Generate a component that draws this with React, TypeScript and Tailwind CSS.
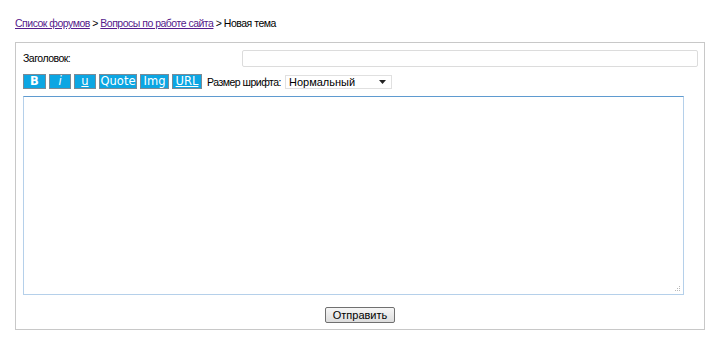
import { useState } from 'react'

const sans = { fontFamily: '"Liberation Sans", Arial, sans-serif' }
const verdana = { fontFamily: '"DejaVu Sans", Verdana, sans-serif' }

function ToolButton({ children, className = '' }: { children: React.ReactNode; className?: string }) {
  return (
    <button
      type="button"
      className={`flex h-[15px] shrink-0 items-center justify-center border border-[#7a8a96] bg-[#0ca6e3] text-[11.5px] leading-none tracking-normal text-white ${className}`}
      style={verdana}
    >
      {children}
    </button>
  )
}

export default function App() {
  const [title, setTitle] = useState('')
  const [body, setBody] = useState('')

  return (
    <div className="min-h-[357px] bg-white text-[10.5px] tracking-[-0.5px] text-black" style={sans}>
      <div className="px-[15px] pt-[17px] leading-[13px]">
        <a href="#" className="text-[#551a8b] underline">Список форумов</a>
        {' > '}
        <a href="#" className="text-[#551a8b] underline">Вопросы по работе сайта</a>
        {' > Новая тема'}
      </div>

      <div className="mx-[15px] mt-[12px] w-[690px] border border-[#c8c8c8] pb-[6px]">
        <div className="flex items-center pl-[7px] pr-[6px] pt-[7px]">
          <span className="w-[219px]">Заголовок:</span>
          <input
            value={title}
            onChange={(e) => setTitle(e.target.value)}
            className="h-[17px] flex-1 rounded-[2px] border border-[#dcdcdc] bg-white px-1 text-[11px] outline-none"
          />
        </div>

        <div className="mt-[7px] flex h-[15px] items-end gap-[3px] pl-[7px]">
          <ToolButton className="w-[23px] font-bold">B</ToolButton>
          <ToolButton className="w-[22px] italic">i</ToolButton>
          <ToolButton className="w-[22px] underline">u</ToolButton>
          <ToolButton className="w-[38px]">Quote</ToolButton>
          <ToolButton className="w-[29px]">Img</ToolButton>
          <ToolButton className="w-[30px] underline">URL</ToolButton>
          <span className="ml-[2px] shrink-0 whitespace-nowrap leading-[13px]">Размер шрифта:</span>
          <div className="ml-[1px] flex h-[14px] w-[107px] shrink-0 items-center justify-between border border-[#e0e0e0] bg-white pl-[3px] pr-[5px]">
            <span className="text-[11px] leading-none tracking-normal">Нормальный</span>
            <svg width="7" height="4" viewBox="0 0 7 4">
              <path d="M0 0h7L3.5 4z" fill="#222" />
            </svg>
          </div>
        </div>

        <div className="pl-[7px] pt-[7px]">
          <div className="relative w-[661px]">
            <textarea
              value={body}
              onChange={(e) => setBody(e.target.value)}
              className="block h-[199px] w-full resize-none border border-[#b5d0ea] border-t-[#5f9bd0] bg-white outline-none"
            />
            <svg className="absolute bottom-[3px] right-[3px]" width="6" height="6" viewBox="0 0 6 6">
              <g fill="#b8b8b8">
                <rect x="4" y="0" width="1" height="1" />
                <rect x="2" y="2" width="1" height="1" />
                <rect x="4" y="2" width="1" height="1" />
                <rect x="0" y="4" width="1" height="1" />
                <rect x="2" y="4" width="1" height="1" />
                <rect x="4" y="4" width="1" height="1" />
              </g>
            </svg>
          </div>
        </div>

        <div className="mt-[12px] flex justify-center">
          <button
            type="button"
            className="h-[16px] w-[70px] rounded-[2px] border border-[#707070] bg-gradient-to-b from-[#f6f6f6] to-[#dddddd] text-[11px] leading-none tracking-normal text-black"
            style={sans}
          >
            Отправить
          </button>
        </div>
      </div>
    </div>
  )
}
